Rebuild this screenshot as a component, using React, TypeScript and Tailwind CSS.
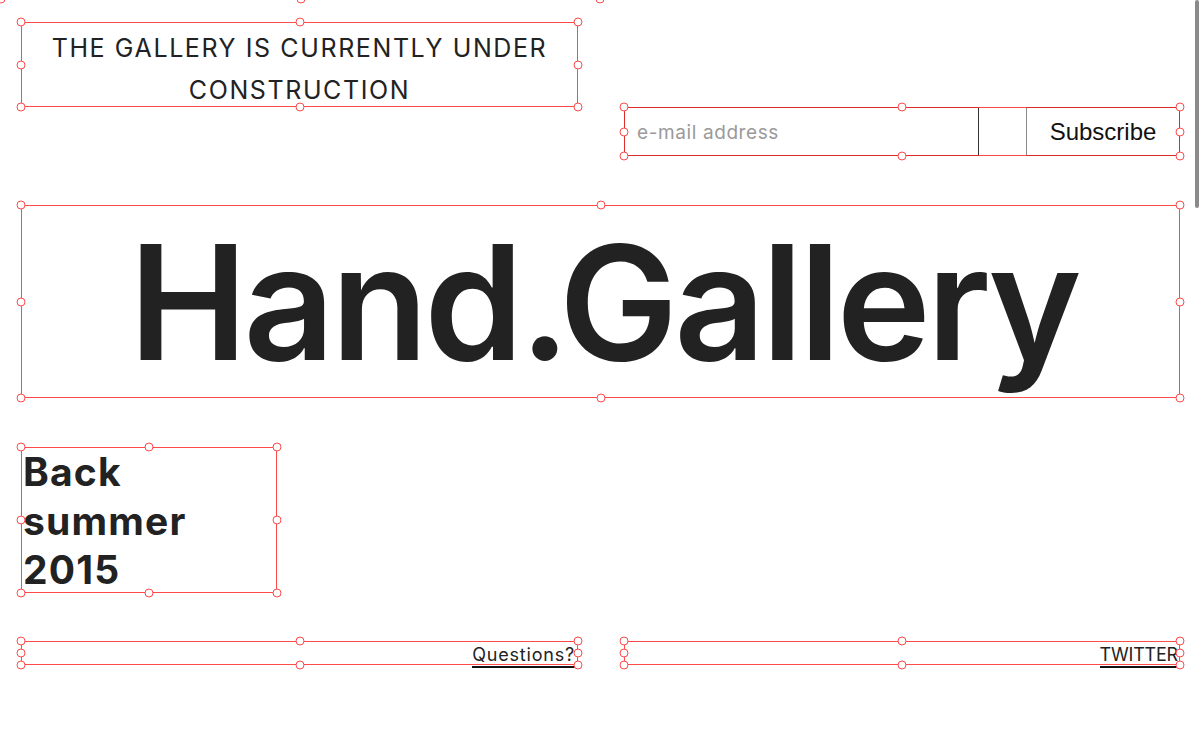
import React from "react";

const handleCls =
  "absolute w-[9px] h-[9px] -translate-x-1/2 -translate-y-1/2 rounded-full border border-[#ff4a4a] bg-white";

function Handles() {
  return (
    <>
      <span className={`${handleCls} left-0 top-0`} />
      <span className={`${handleCls} left-1/2 top-0`} />
      <span className={`${handleCls} left-full top-0`} />
      <span className={`${handleCls} left-0 top-1/2`} />
      <span className={`${handleCls} left-full top-1/2`} />
      <span className={`${handleCls} left-0 top-full`} />
      <span className={`${handleCls} left-1/2 top-full`} />
      <span className={`${handleCls} left-full top-full`} />
    </>
  );
}

function Sel({ className, children }: { className?: string; children?: React.ReactNode }) {
  return (
    <div className={`relative shrink-0 ${className ?? ""}`}>
      {children}
      <div className="pointer-events-none absolute inset-0 border border-[#ff2a2a]/85" />
      <div className="pointer-events-none absolute inset-0">
        <Handles />
      </div>
    </div>
  );
}

const karla = "font-['Inter','Noto_Sans',sans-serif]";

export default function App() {
  return (
    <div className={`relative h-[730px] w-[1200px] overflow-hidden bg-white text-[#222] ${karla}`}>
      {/* partial selection above the viewport */}
      <div className="pointer-events-none absolute left-0 top-[-40px] h-[40px] w-[601px] border border-[#ff2a2a]/85">
        <Handles />
      </div>

      <div className="flex flex-col pl-[21px] pt-[22px]">
        {/* top row */}
        <div className="flex items-start">
          <Sel className="flex h-[85px] w-[557px] flex-col items-center justify-center">
            <p className="pt-[8px] text-center text-[25px] leading-[42px] tracking-[1.6px] text-[#222]">
              THE GALLERY IS CURRENTLY UNDER
              <br />
              CONSTRUCTION
            </p>
          </Sel>
          <Sel className="ml-[46px] mt-[85px] flex h-[49px] w-[556px]">
            <div className="flex h-full w-[355px] items-center border border-[#333] pl-[12px] pt-[3px] text-[19px] tracking-[0.6px] text-[#9a9a9a]">
              e-mail address
            </div>
            <div className="w-[47px]" />
            <div className="flex h-full flex-1 items-center justify-center border border-[#222] border-l-[#8a8a8a] font-['Liberation_Sans',Arial,sans-serif] text-[24px] text-[#111]">
              Subscribe
            </div>
          </Sel>
        </div>

        {/* title */}
        <Sel className="mt-[49px] flex h-[193px] w-[1159px] items-center justify-center">
          <h1 className="ml-[6px] mt-[2px] text-[159px] font-semibold leading-none tracking-[-4px] text-[#222]">
            Hand.Gallery
          </h1>
        </Sel>

        {/* back summer */}
        <Sel className="mt-[49px] h-[146px] w-[256px]">
          <p className="pl-[2px] pt-[0px] text-[39px] font-bold leading-[49px] tracking-[1.2px] text-[#222]">
            Back
            <br />
            summer
            <br />
            2015
          </p>
        </Sel>

        {/* footer */}
        <div className="mt-[48px] flex items-start">
          <Sel className="flex h-[24px] w-[557px] items-end justify-end">
            <span className="mb-[-3px] mr-[3px] border-b-2 border-[#111] text-[18px] leading-[22px] tracking-[0.8px]">
              Questions?
            </span>
          </Sel>
          <Sel className="ml-[46px] flex h-[24px] w-[556px] items-end justify-end">
            <span className="mb-[-3px] mr-[2px] border-b-2 border-[#111] text-[18px] leading-[22px] tracking-[-0.2px]">
              TWITTER
            </span>
          </Sel>
        </div>
      </div>

      {/* scrollbar */}
      <div className="absolute right-[1px] top-0 h-[208px] w-[4px] rounded-full bg-[#8a8a8a]" />
    </div>
  );
}
